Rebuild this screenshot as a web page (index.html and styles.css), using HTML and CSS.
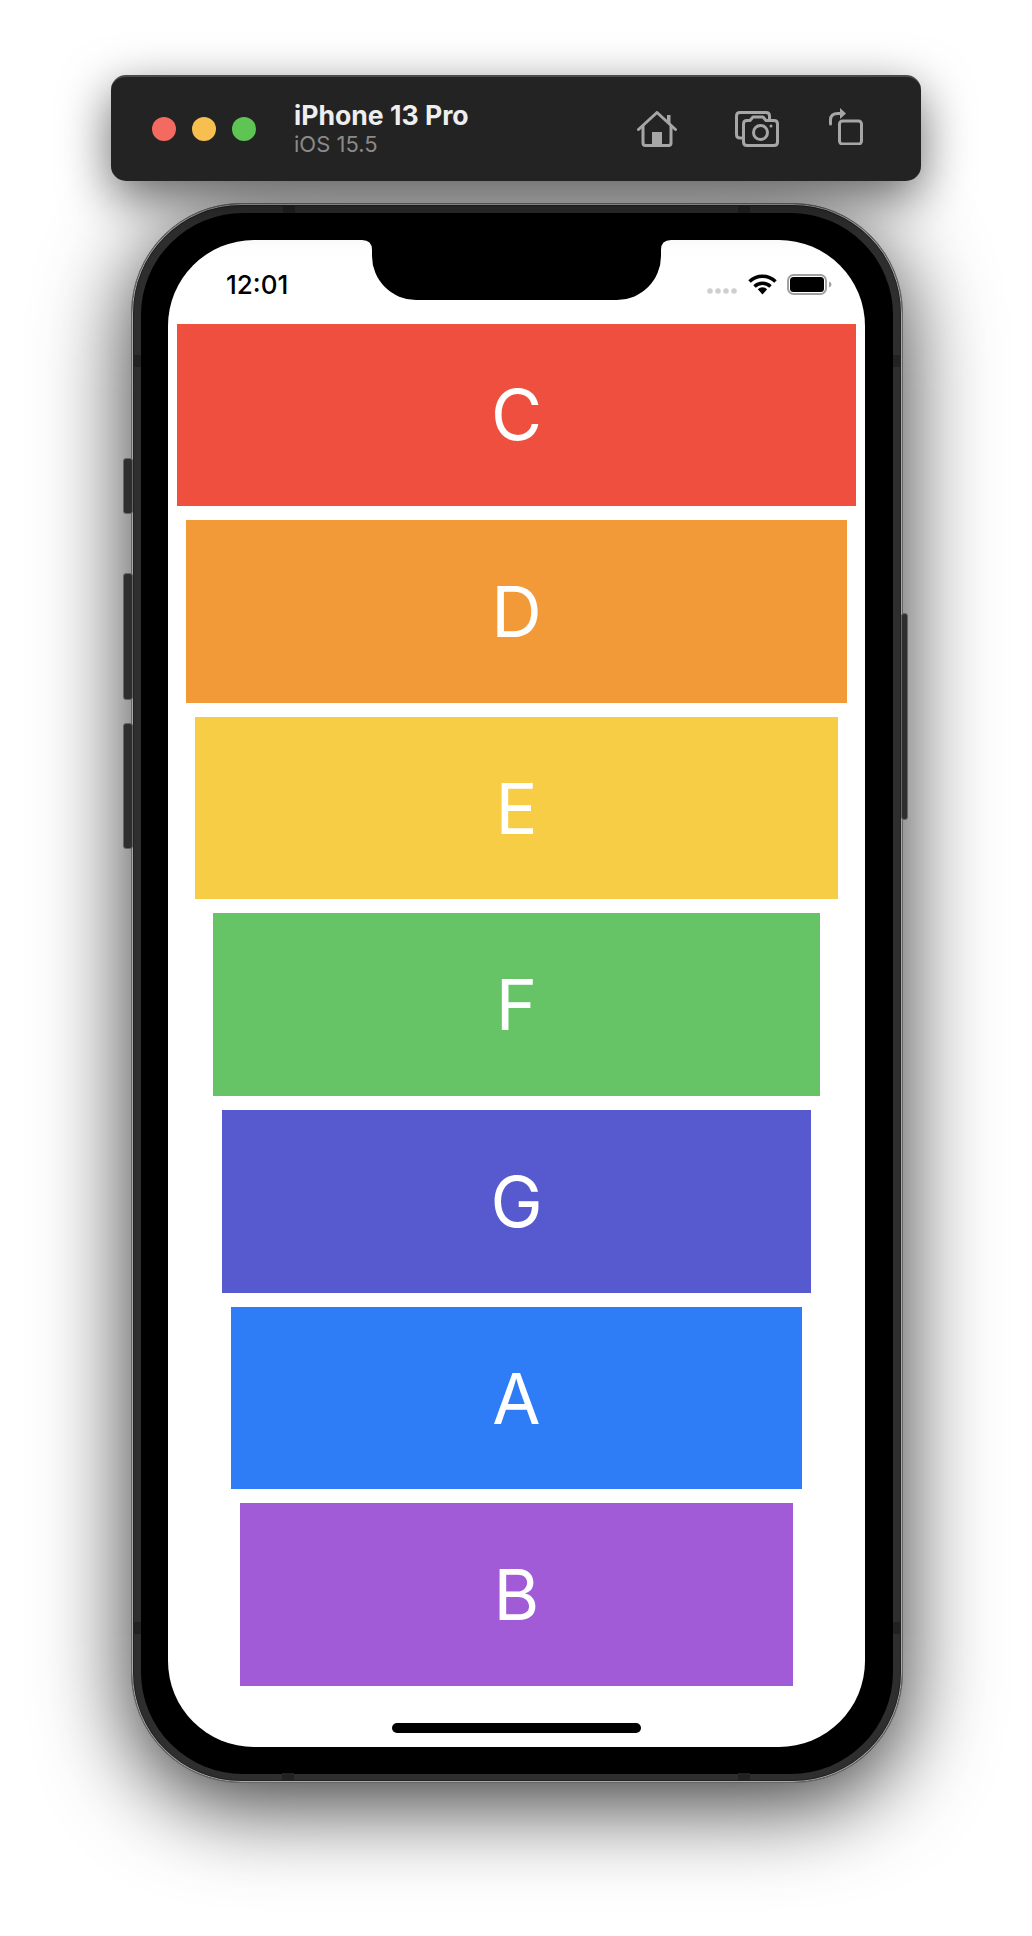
FILE: index.html
```html
<!DOCTYPE html>
<html lang="en">
<head>
  <meta charset="UTF-8" />
  <meta name="viewport" content="width=device-width, initial-scale=1.0"/>
  <title>iPhone 13 Pro</title>
  <link rel="stylesheet" href="styles.css">
</head>
<body>

  <header class="toolbar">
    <div class="lights">
      <span class="light light-red"></span>
      <span class="light light-yellow"></span>
      <span class="light light-green"></span>
    </div>
    <div class="device-name">
      <div class="name">iPhone 13 Pro</div>
      <div class="os">iOS 15.5</div>
    </div>
    <div class="tools">
      <svg class="tool-home" width="40" height="36" viewBox="0 0 40 36">
        <path class="line" d="M1.500 18.500 L20 1.500 L38.500 18.500"/>
        <path class="line" d="M6 15 V32 Q6 34.500 8.500 34.500 H31.500 Q34 34.500 34 32 V15"/>
        <path class="solid" d="M15 21 H25 V34 H15 Z M30 4 H33.500 V13 L30 10 Z"/>
      </svg>
      <svg class="tool-camera" width="44" height="36" viewBox="0 0 44 36">
        <path class="line" d="M8 27 H5 Q1.500 27 1.500 23.500 V5 Q1.500 1.500 5 1.500 H31 Q34.500 1.500 34.500 5 V8"/>
        <path class="line" d="M12 34.500 Q8.500 34.500 8.500 31 V13 Q8.500 9.500 12 9.500 H15 L18 6 H28 L31 9.500 H39 Q42.500 9.500 42.500 13 V31 Q42.500 34.500 39 34.500 Z"/>
        <circle class="line" cx="25.500" cy="21.500" r="7"/>
        <circle class="solid" cx="36" cy="15" r="1.500"/>
      </svg>
      <svg class="tool-rotate" width="34" height="37" viewBox="0 0 34 37">
        <rect class="line" x="10.500" y="13" width="22" height="23" rx="3"/>
        <path class="line" d="M1.500 16 V12 Q1.500 5.500 9 5.500 H12"/>
        <path class="solid" d="M11 0 L17 5.500 L11 11 Z"/>
      </svg>
    </div>
  </header>

  <div class="device">
    <span class="side-btn btn-mute"></span>
    <span class="side-btn btn-up"></span>
    <span class="side-btn btn-down"></span>
    <span class="side-btn btn-power"></span>

    <span class="band band-top-l"></span>
    <span class="band band-top-r"></span>
    <span class="band band-bottom-l"></span>
    <span class="band band-bottom-r"></span>
    <span class="band band-left-t"></span>
    <span class="band band-left-b"></span>
    <span class="band band-right-t"></span>
    <span class="band band-right-b"></span>

    <div class="bezel">
      <main class="screen">
        <svg class="notch" width="309" height="60" viewBox="0 0 309 60">
          <path d="M0 0 H309 Q299 0 299 10 V16 A44 44 0 0 1 255 60 H54 A44 44 0 0 1 10 16 V10 Q10 0 0 0 Z"/>
        </svg>

        <div class="status-bar">
          <span class="time">12:01</span>
          <div class="status-icons">
            <svg width="30" height="7" viewBox="0 0 30 7">
              <circle cx="3" cy="3" r="2.800"/>
              <circle cx="11" cy="3" r="2.800"/>
              <circle cx="19" cy="3" r="2.800"/>
              <circle cx="27" cy="3" r="2.800"/>
            </svg>
            <svg class="wifi" width="29" height="21" viewBox="0 0 29 21">
              <path class="arc" d="M1.500 7.500 A18.500 18.500 0 0 1 27.500 7.500"/>
              <path class="arc" d="M6.500 12.500 A11.500 11.500 0 0 1 22.500 12.500"/>
              <path d="M9.800 15.200 A6.800 6.800 0 0 1 19.200 15.200 L14.500 20.500 Z"/>
            </svg>
            <svg class="battery" width="45" height="21" viewBox="0 0 45 21">
              <rect class="battery-case" x="1" y="1" width="38" height="19" rx="5.500"/>
              <rect x="3" y="3" width="34" height="15" rx="3.500"/>
              <path class="battery-tip" d="M42 7.500 Q44.500 8.500 44.500 10.500 Q44.500 12.500 42 13.500 Z"/>
            </svg>
          </div>
        </div>

        <div class="rows">
          <div class="row row-c">C</div>
          <div class="row row-d">D</div>
          <div class="row row-e">E</div>
          <div class="row row-f">F</div>
          <div class="row row-g">G</div>
          <div class="row row-a">A</div>
          <div class="row row-b">B</div>
        </div>

        <div class="home-indicator"></div>
      </main>
    </div>
  </div>

</body>
</html>
```

FILE: styles.css
```css
html {
  margin: 0;
  padding: 0;
  background-color: #fff;
}
body {
  margin: 0;
  padding: 0;
  width: 1032px;
  height: 1936px;
  overflow: hidden;
  font-family: Inter, "Liberation Sans", sans-serif;
}

/* simulator title bar */
.toolbar {
  box-sizing: border-box;
  display: flex;
  align-items: center;
  position: relative;
  z-index: 1;
  width: 810px;
  height: 106px;
  margin: 75px 0 0 111px;
  padding: 0 0 0 41px;
  background-color: #232323;
  border-radius: 15px;
  border-top: 2px solid #4a4a4a;
  box-shadow: 0 16px 50px rgba(0,0,0,0.6);
}
.lights {
  display: flex;
  gap: 16px;
}
.light {
  display: block;
  width: 24px;
  height: 24px;
  border-radius: 50%;
}
.light-red { background-color: #f26a60; }
.light-yellow { background-color: #f7bf4f; }
.light-green { background-color: #5ec453; }
.device-name {
  margin-left: 38px;
}
.name {
  font-size: 26.600px;
  line-height: 30px;
  font-weight: 700;
  color: #eeeeee;
}
.os {
  font-size: 22px;
  line-height: 28px;
  color: #8a8a8a;
}
.tools {
  display: flex;
  align-items: center;
  margin-left: 168px;
}
.tool-camera { margin-left: 58px; }
.tool-rotate { margin-left: 50px; margin-top: -6px; }
.line {
  fill: none;
  stroke: #a6a6a6;
  stroke-width: 3;
  stroke-linecap: round;
  stroke-linejoin: round;
}
.solid {
  fill: #a6a6a6;
}

/* phone body */
.device {
  box-sizing: border-box;
  position: relative;
  z-index: 0;
  width: 772px;
  height: 1580px;
  margin: 22px 0 0 131px;
  padding: 9px 9px 8px;
  background-color: #2e2e2e;
  border: 1px solid #666;
  border-radius: 110px;
  box-shadow: 0 20px 90px rgba(0,0,0,0.8), inset 0 0 0 1px #a8a8a8, inset 0 0 0 2px #222;
}
.bezel {
  padding: 27px;
  background-color: #000;
  border-radius: 102px;
}
.side-btn {
  position: absolute;
  box-sizing: border-box;
  width: 10px;
  background-color: #2e2e2e;
  border: 1px solid #666;
  border-radius: 3px;
}
.btn-mute { left: -9px; top: 254px; height: 56px; }
.btn-up { left: -9px; top: 369px; height: 127px; }
.btn-down { left: -9px; top: 519px; height: 126px; }
.btn-power { right: -6px; top: 409px; height: 207px; width: 7px; }
.band {
  position: absolute;
  width: 12px;
  height: 7px;
  background-color: #222;
}
.band-top-l { left: 151px; top: 2px; }
.band-top-r { right: 152px; top: 2px; }
.band-bottom-l { left: 150px; bottom: 2px; }
.band-bottom-r { right: 152px; bottom: 2px; }
.band-left-t, .band-left-b, .band-right-t, .band-right-b {
  width: 7px;
  height: 12px;
}
.band-left-t { left: 2px; top: 151px; }
.band-left-b { left: 2px; top: 1418px; }
.band-right-t { right: 2px; top: 151px; }
.band-right-b { right: 2px; top: 1418px; }

/* screen */
.screen {
  position: relative;
  box-sizing: border-box;
  width: 697px;
  height: 1507px;
  background-color: #fff;
  border-radius: 86px;
  overflow: hidden;
}
.notch {
  position: absolute;
  top: 0;
  left: 194px;
  fill: #000;
}
.status-bar {
  box-sizing: border-box;
  display: flex;
  justify-content: space-between;
  height: 83.500px;
  padding: 29px 33px 0 58px;
}
.time {
  font-size: 26px;
  line-height: 32px;
  font-weight: 500;
  color: #000;
}
.status-icons {
  display: flex;
  align-items: flex-end;
  gap: 11px;
  height: 22px;
  margin-top: 4px;
  fill: #cfcfcf;
}
.wifi {
  fill: #000;
}
.arc {
  fill: none;
  stroke: #000;
  stroke-width: 3.500;
}
.battery {
  fill: #000;
  margin-left: -1px;
}
.battery-case {
  fill: #fff;
  stroke: #a0a0a0;
  stroke-width: 2;
}
.battery-tip {
  fill: #a0a0a0;
}
.rows {
  display: flex;
  flex-direction: column;
  gap: 14px;
}
.row {
  height: 182.670px;
  display: flex;
  align-items: center;
  justify-content: center;
  color: #fff;
  font-size: 70px;
}
.row-c { margin: 0 9px; background-color: #ee4f3e; }
.row-d { margin: 0 18px; background-color: #f29a37; }
.row-e { margin: 0 27px; background-color: #f6cd45; }
.row-f { margin: 0 45px; background-color: #66c466; }
.row-g { margin: 0 54px; background-color: #565ace; }
.row-a { margin: 0 63px; background-color: #2e7cf6; }
.row-b { margin: 0 72px; background-color: #a25bd6; }
.home-indicator {
  width: 249px;
  height: 10px;
  margin: 36.500px auto 0;
  background-color: #000;
  border-radius: 5px;
}
```
